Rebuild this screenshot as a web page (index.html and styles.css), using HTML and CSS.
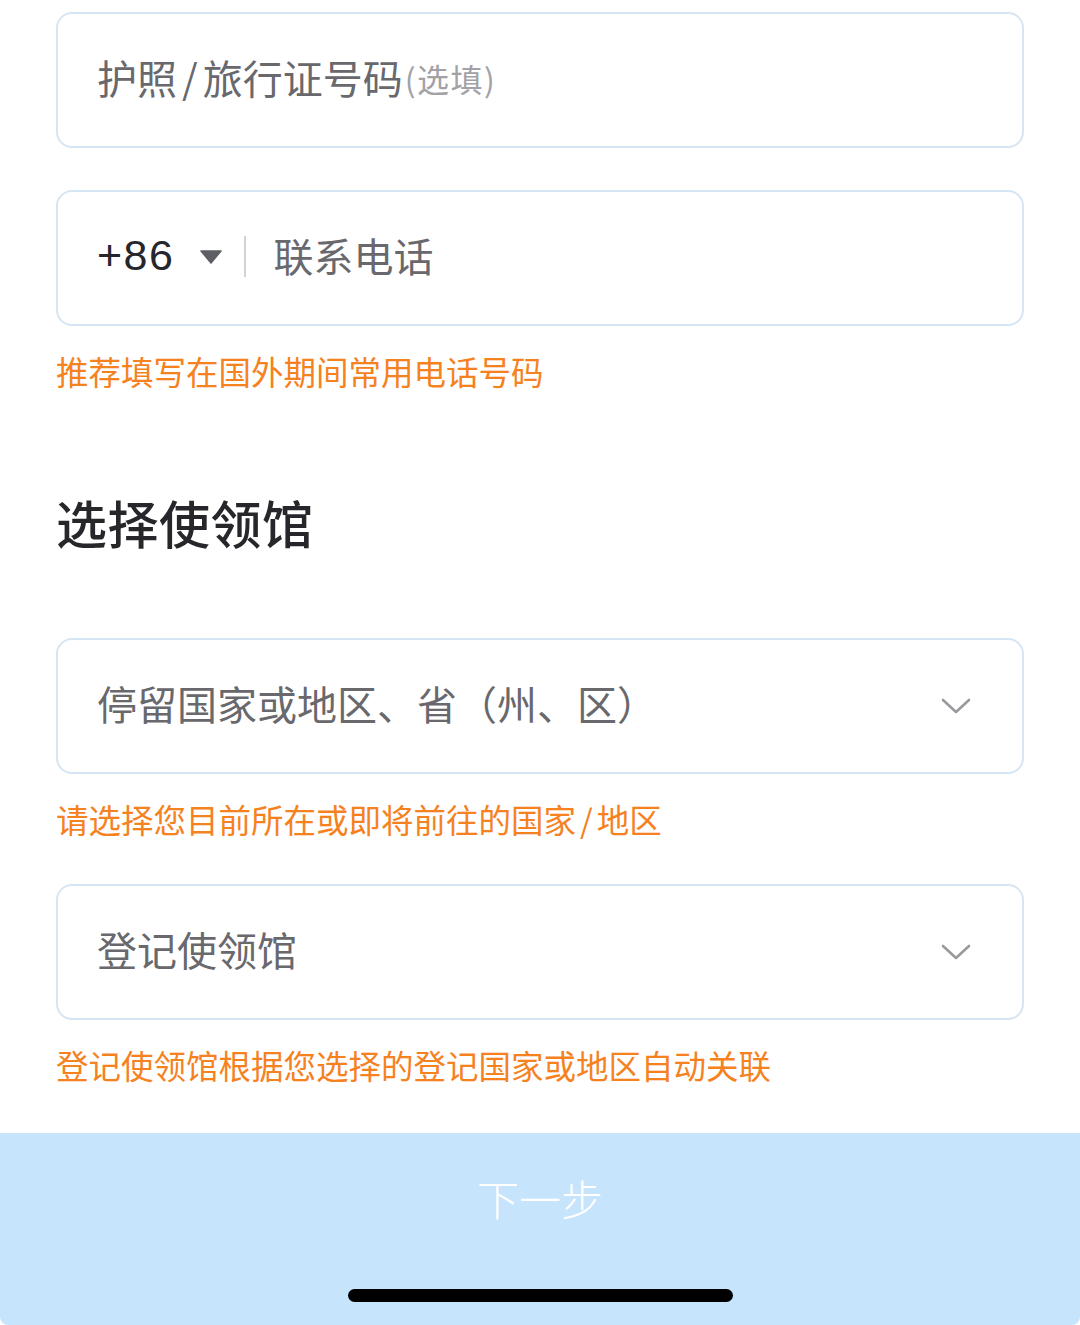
FILE: index.html
```html
<!DOCTYPE html>
<html lang="zh-CN">
<head>
<meta charset="utf-8">
<link rel="stylesheet" href="styles.css">
</head>
<body>
<div class="page">
  <div class="form">
    <div class="field first">
      <span class="ph">护照<span class="sl">/</span>旅行证号码</span><span class="ph-opt">(选填)</span>
    </div>
    <div class="field gap">
      <span class="code">+86</span>
      <svg class="tri" width="22" height="14" viewBox="0 0 22 14"><path d="M1 1 H21 L11 13 Z" fill="#5d5f64" stroke="#5d5f64" stroke-width="1.5" stroke-linejoin="round"/></svg>
      <span class="divider"></span>
      <span class="ph">联系电话</span>
    </div>
    <p class="hint">推荐填写在国外期间常用电话号码</p>

    <h2 class="title">选择使领馆</h2>

    <div class="field select first-sel">
      <span class="ph">停留国家或地区、省（州、区）</span>
      <svg class="chev" width="30" height="16" viewBox="0 0 30 16"><path d="M2 2 L15 14 L28 2" fill="none" stroke="#9a9a9e" stroke-width="2.6" stroke-linecap="round" stroke-linejoin="round"/></svg>
    </div>
    <p class="hint">请选择您目前所在或即将前往的国家<span class="sl2">/</span>地区</p>

    <div class="field select gap2">
      <span class="ph">登记使领馆</span>
      <svg class="chev" width="30" height="16" viewBox="0 0 30 16"><path d="M2 2 L15 14 L28 2" fill="none" stroke="#9a9a9e" stroke-width="2.6" stroke-linecap="round" stroke-linejoin="round"/></svg>
    </div>
    <p class="hint">登记使领馆根据您选择的登记国家或地区自动关联</p>
  </div>

  <div class="footer">
    <div class="next">下一步</div>
    <div class="home"></div>
  </div>
</div>
</body>
</html>
```

FILE: styles.css
```css
* { box-sizing: border-box; }
html, body {
  margin: 0;
  padding: 0;
  background: #ffffff;
}
body {
  font-family: "Noto Sans CJK SC", "Noto Sans", sans-serif;
}
.page {
  width: 1080px;
  height: 1325px;
  display: flex;
  flex-direction: column;
  overflow: hidden;
}
.form {
  padding: 12px 56px 0 56px;
  display: flex;
  flex-direction: column;
}
.field {
  height: 136px;
  border: 2px solid #d6e5f4;
  border-radius: 16px;
  display: flex;
  align-items: center;
  padding: 0 51px 0 39px;
  background: #fff;
}
.field.gap { margin-top: 42px; }
.field.first-sel { margin-top: 81px; }
.field.gap2 { margin-top: 43px; }
.ph {
  font-size: 40px;
  line-height: 1;
  color: #68686d;
  white-space: nowrap;
  padding-bottom: 7px;
}
.sl {
  margin: 0 5px;
}
.sl2 {
  margin: 0 4px;
}
.ph-opt {
  font-size: 32px;
  line-height: 1;
  color: #a2a2a6;
  letter-spacing: 1.5px;
  padding-bottom: 5px;
  margin-left: 2px;
}
.code {
  font-family: "Liberation Sans", "Noto Sans", sans-serif;
  font-size: 43px;
  line-height: 1;
  color: #26272c;
  letter-spacing: 1.5px;
  padding-bottom: 6px;
}
.tri {
  margin-left: 26px;
  display: block;
  margin-bottom: 2px;
}
.divider {
  width: 2px;
  height: 41px;
  background: #d2d2d4;
  margin: 0 27px 4px 22px;
}
.select { justify-content: space-between; }
.chev { display: block; }
.hint {
  margin: 22px 0 0 0;
  font-size: 32.5px;
  line-height: 45px;
  color: #f5821f;
  white-space: nowrap;
}
.title {
  margin: 94px 0 0 0;
  font-size: 51px;
  line-height: 70px;
  font-weight: 500;
  color: #26262b;
  letter-spacing: 0.5px;
}
.footer {
  margin-top: auto;
  height: 192px;
  background: #c7e4fd;
  border-bottom-left-radius: 8px;
  border-bottom-right-radius: 8px;
  display: flex;
  flex-direction: column;
  align-items: center;
  padding-top: 35px;
}
.next {
  font-size: 42px;
  line-height: 60px;
  color: #ffffff;
  font-weight: 300;
}
.home {
  margin-top: 61px;
  width: 385px;
  height: 13px;
  border-radius: 7px;
  background: #000;
}
```
